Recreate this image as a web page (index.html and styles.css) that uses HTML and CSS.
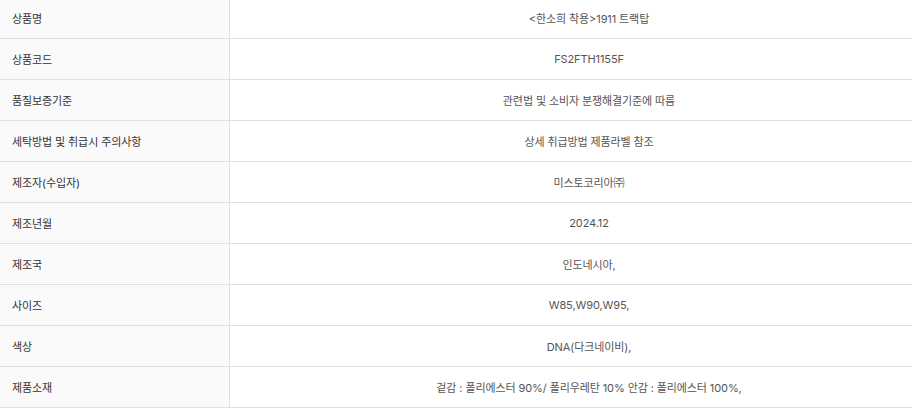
FILE: index.html
```html
<!DOCTYPE html>
<html lang="ko">
<head>
<meta charset="utf-8">
<link rel="stylesheet" href="styles.css">
</head>
<body>
<div class="wrap">
<table class="spec">
<tbody>
<tr><th>상품명</th><td>&lt;한소희 착용&gt;1911 트랙탑</td></tr>
<tr><th>상품코드</th><td>FS2FTH1155F</td></tr>
<tr><th>품질보증기준</th><td>관련법 및 소비자 분쟁해결기준에 따름</td></tr>
<tr><th>세탁방법 및 취급시 주의사항</th><td>상세 취급방법 제품라벨 참조</td></tr>
<tr><th>제조자(수입자)</th><td>미스토코리아㈜</td></tr>
<tr><th>제조년월</th><td>2024.12</td></tr>
<tr><th>제조국</th><td>인도네시아,</td></tr>
<tr><th>사이즈</th><td>W85,W90,W95,</td></tr>
<tr><th>색상</th><td>DNA(다크네이비),</td></tr>
<tr><th>제품소재</th><td>겉감 : 폴리에스터 90%/ 폴리우레탄 10% 안감 : 폴리에스터 100%,</td></tr>
</tbody>
</table>
</div>
</body>
</html>
```
FILE: styles.css
```css
html, body {
  margin: 0;
  padding: 0;
  background: #fff;
}
body {
  font-family: Inter, "Noto Sans CJK KR", "Noto Sans", sans-serif;
  overflow: hidden;
}
.wrap {
  width: 912px;
  overflow: hidden;
  margin-top: -2px;
}
.spec {
  width: 948px;
  border-collapse: collapse;
  table-layout: fixed;
}
.spec th, .spec td {
  height: 40px;
  padding: 0;
  border-bottom: 1px solid #e0e0e0;
  font-size: 11px;
  font-weight: 400;
  letter-spacing: -0.1px;
}
.spec th {
  width: 217px;
  padding-left: 12px;
  text-align: left;
  background: #fafafa;
  color: #333;
  border-right: 1px solid #e0e0e0;
}
.spec td {
  text-align: center;
  color: #555;
}
```
